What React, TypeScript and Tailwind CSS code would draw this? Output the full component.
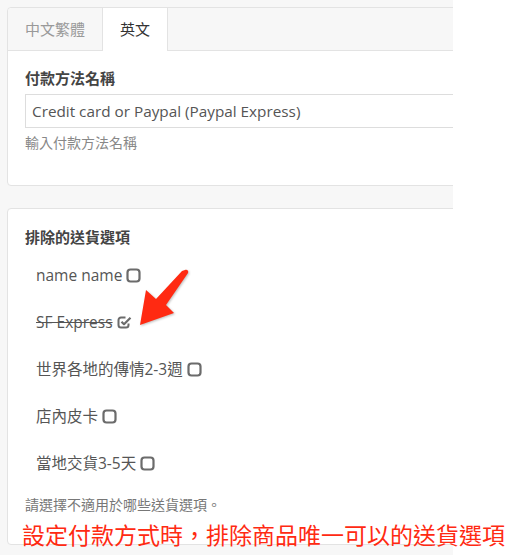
import React from 'react';

const font = { fontFamily: '"Open Sans", "Noto Sans CJK TC", sans-serif' };

const shippingOptions = [
  { name: 'name name', excluded: false },
  { name: 'SF Express', excluded: true },
  { name: '世界各地的傳情2-3週', excluded: false },
  { name: '店內皮卡', excluded: false },
  { name: '當地交貨3-5天', excluded: false },
];

const SquareIcon = ({ checked }: { checked: boolean }) => (
  <svg width="15" height="15" viewBox="0 0 15 15" className="ml-[4px] inline-block">
    {checked ? (
      <>
        <path
          d="M11.5 8.5 V10 A2.5 2.5 0 0 1 9 12.5 H4 A2.5 2.5 0 0 1 1.5 10 V5 A2.5 2.5 0 0 1 4 2.5 H8.5"
          fill="none"
          stroke="#6b6b6b"
          strokeWidth="2"
        />
        <path d="M4.5 6.8 L7 9.2 L13.5 2.7" fill="none" stroke="#6b6b6b" strokeWidth="2.2" strokeLinejoin="round" />
      </>
    ) : (
      <rect x="1.5" y="1.5" width="12" height="12" rx="3" fill="none" stroke="#6b6b6b" strokeWidth="2.2" />
    )}
  </svg>
);

const Arrow = () => (
  <svg
    width="60"
    height="64"
    viewBox="0 0 60 64"
    className="absolute left-[135px] top-[267px]"
    style={{ filter: 'drop-shadow(1px 1px 1px rgba(0,0,0,0.25))' }}
  >
    <path d="M50 3 C52 2 54 4 53 6 L31 38 L39 46 L5 58 L11 23 L21 32 L47 4 Z" fill="#ff2a12" />
  </svg>
);

const App = () => {
  return (
    <div className="relative flex w-[519px] h-[555px] bg-white overflow-hidden" style={font}>
      <div className="w-[453px] h-full bg-[#f7f7f7] overflow-hidden pt-[7px] pl-[7px]">
        {/* language tabs card */}
        <div className="w-[500px] bg-white border border-[#e3e3e3] rounded-[4px]">
          <div className="flex h-[43px] bg-[#f7f7f7] border-b border-[#e3e3e3] rounded-t-[4px]">
            <div className="flex items-center px-[17px] text-[15px] text-[#999]">中文繁體</div>
            <div className="flex items-center px-[17px] bg-white border-x border-[#e3e3e3] text-[15px] text-[#333] -mb-px">
              英文
            </div>
          </div>
          <div className="px-[17px] pt-[16px] pb-[32px]">
            <div className="text-[15px] font-semibold text-[#444] leading-[22px]">付款方法名稱</div>
            <div className="mt-[5px] h-[34px] border border-[#dddddd] flex items-center px-[6px] text-[15.3px] text-[#555]">
              Credit card or Paypal (Paypal Express)
            </div>
            <div className="mt-[5px] text-[14px] text-[#888] leading-[20px]">輸入付款方法名稱</div>
          </div>
        </div>

        {/* excluded shipping card */}
        <div className="mt-[22px] w-[500px] h-[337px] bg-white border border-[#e3e3e3] rounded-[4px] px-[17px] pt-[17px]">
          <div className="text-[15px] font-semibold text-[#444] leading-[22px]">排除的送貨選項</div>
          <div className="mt-[4px] pl-[11px] flex flex-col">
            {shippingOptions.map((opt, i) => (
              <div key={i} className="h-[47px] flex items-center text-[15.5px] text-[#555]">
                <span className={opt.excluded ? 'line-through' : ''}>{opt.name}</span>
                <SquareIcon checked={opt.excluded} />
              </div>
            ))}
          </div>
          <div className="mt-[8px] text-[14px] text-[#777] leading-[20px]">請選擇不適用於哪些送貨選項。</div>
        </div>
      </div>

      <Arrow />
      <div className="absolute left-[22px] top-[519px] text-[23px] leading-[32px] text-[#ff2a12] whitespace-nowrap">
        設定付款方式時，排除商品唯一可以的送貨選項
      </div>
    </div>
  );
};

export default App;
